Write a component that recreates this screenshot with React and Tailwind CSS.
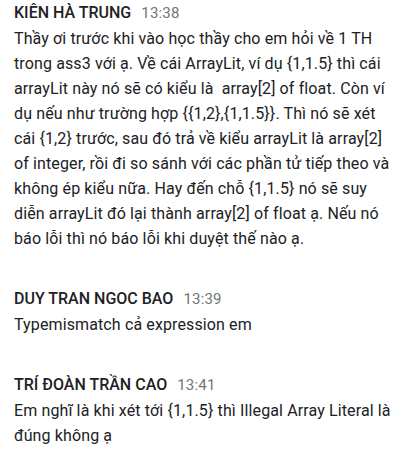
const messages = [
  {
    name: 'KIÊN HÀ TRUNG',
    time: '13:38',
    text: 'Thầy ơi trước khi vào học thầy cho em hỏi về 1 TH trong ass3 với ạ. Về cái ArrayLit, ví dụ {1,1.5} thì cái arrayLit này nó sẽ có kiểu là  array[2] of float. Còn ví dụ nếu như trường hợp {{1,2},{1,1.5}}. Thì nó sẽ xét cái {1,2} trước, sau đó trả về kiểu arrayLit là array[2] of integer, rồi đi so sánh với các phần tử tiếp theo và không ép kiểu nữa. Hay đến chỗ {1,1.5} nó sẽ suy diễn arrayLit đó lại thành array[2] of float ạ. Nếu nó báo lỗi thì nó báo lỗi khi duyệt thế nào ạ.',
  },
  { name: 'DUY TRAN NGOC BAO', time: '13:39', text: 'Typemismatch cả expression em' },
  {
    name: 'TRÍ ĐOÀN TRẦN CAO',
    time: '13:41',
    text: 'Em nghĩ là khi xét tới {1,1.5} thì Illegal Array Literal là đúng không ạ',
  },
]

export default function App() {
  return (
    <div className="w-[416px] h-[465px] bg-white pl-[14px] pr-[22px] overflow-hidden font-['Roboto',sans-serif]">
      <div className="flex flex-col gap-[35px]">
        {messages.map((m) => (
          <div key={m.name}>
            <div className="flex items-baseline gap-[10px] leading-[26px]">
              <span className="text-[16px] font-medium text-[#202124]">{m.name}</span>
              <span className="text-[15px] tracking-[0.2px] text-[#70757a]">{m.time}</span>
            </div>
            <p className="text-[16px] leading-[25px] tracking-[0.12px] text-[#202124] whitespace-pre-wrap">{m.text}</p>
          </div>
        ))}
      </div>
    </div>
  )
}
